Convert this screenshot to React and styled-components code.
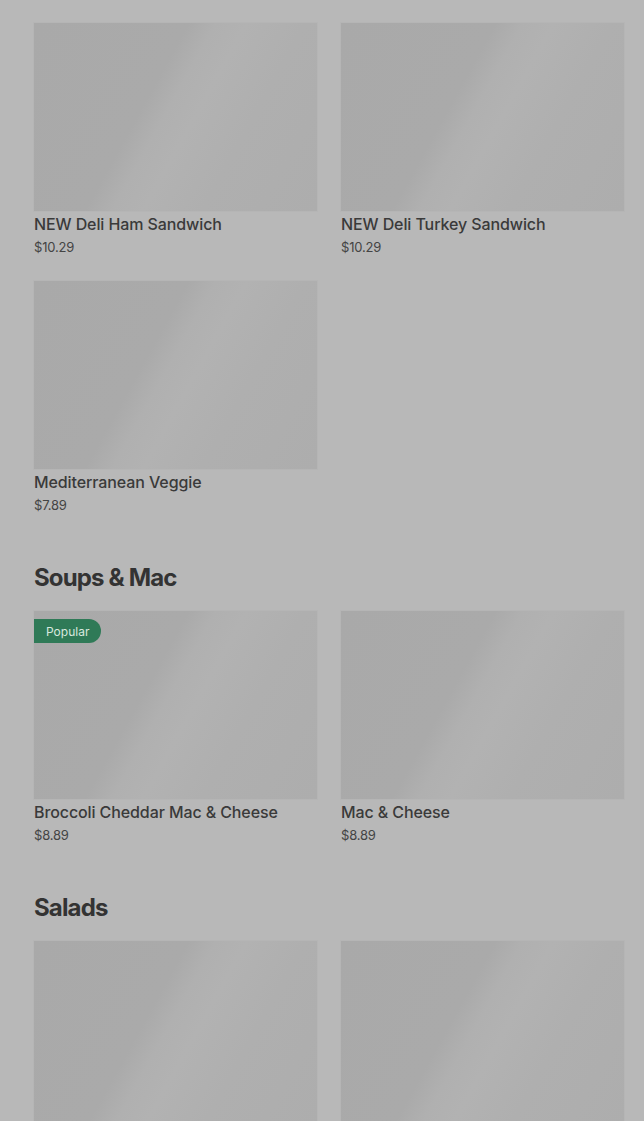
import React from 'react';
import styled, { createGlobalStyle } from 'styled-components';

const Global = createGlobalStyle`
	html, body {
		margin: 0;
		background: #b8b8b8;
	}
	body {
		font-family: Inter, "Noto Sans", "Liberation Sans", sans-serif;
		color: #363636;
		overflow: hidden;
	}
`;

const sections = [
	{
		items: [
			{ name: 'NEW Deli Ham Sandwich', price: '$10.29' },
			{ name: 'NEW Deli Turkey Sandwich', price: '$10.29' },
			{ name: 'Mediterranean Veggie', price: '$7.89' },
		],
	},
	{
		title: 'Soups & Mac',
		items: [
			{ name: 'Broccoli Cheddar Mac & Cheese', price: '$8.89', popular: true },
			{ name: 'Mac & Cheese', price: '$8.89' },
		],
	},
	{
		title: 'Salads',
		// cards run past the bottom of the view, only the photos show
		items: [{}, {}],
	},
];

export default function App() {
	return (
		<>
			<Global/>
			<Page>
				{sections.map((s, i) => (
					<Section key={i} $first={i === 0}>
						{s.title && <Heading>{s.title}</Heading>}
						<Grid>
							{s.items.map((item, j) => (
								<Card key={j}>
									<Photo>
										{item.popular && <Badge>Popular</Badge>}
									</Photo>
									{item.name && <Name>{item.name}</Name>}
									{item.price && <Price>{item.price}</Price>}
								</Card>
							))}
						</Grid>
					</Section>
				))}
			</Page>
		</>
	);
}

const Page = styled.div`
	padding: 23px 20px 0 34px;
`;

const Section = styled.section`
	margin-top: ${p => (p.$first ? '0' : '48px')};
`;

const Heading = styled.h2`
	margin: 0 0 17px;
	font-size: 24px;
	line-height: 32px;
	font-weight: 700;
	letter-spacing: -0.85px;
	color: #333;
`;

const Grid = styled.div`
	display: grid;
	grid-template-columns: 1fr 1fr;
	column-gap: 24px;
	row-gap: 25px;
`;

const Card = styled.div`
	display: flex;
	flex-direction: column;
`;

const Photo = styled.div`
	position: relative;
	height: 188px;
	background: linear-gradient(119deg, #a9a9a9 0%, #aaaaaa 40%, #b0b0b0 47%, #b2b2b2 55%, #afafaf 70%, #adadad 100%);
	box-shadow: 0 0 0 1px #b5b5b5;
`;

const Badge = styled.span`
	position: absolute;
	top: 8px;
	left: 0;
	height: 24px;
	padding: 0 12px;
	display: flex;
	align-items: center;
	border-radius: 0 12px 12px 0;
	background: #2f7a57;
	color: #d8e8df;
	font-size: 12px;
	font-weight: 400;
`;

const Name = styled.div`
	margin-top: 3px;
	font-size: 16px;
	line-height: 20px;
	font-weight: 500;
	color: #3a3a3a;
	letter-spacing: -0.1px;
`;

const Price = styled.div`
	margin-top: 4px;
	font-size: 13px;
	line-height: 18px;
	color: #444;
	letter-spacing: -0.2px;
`;
